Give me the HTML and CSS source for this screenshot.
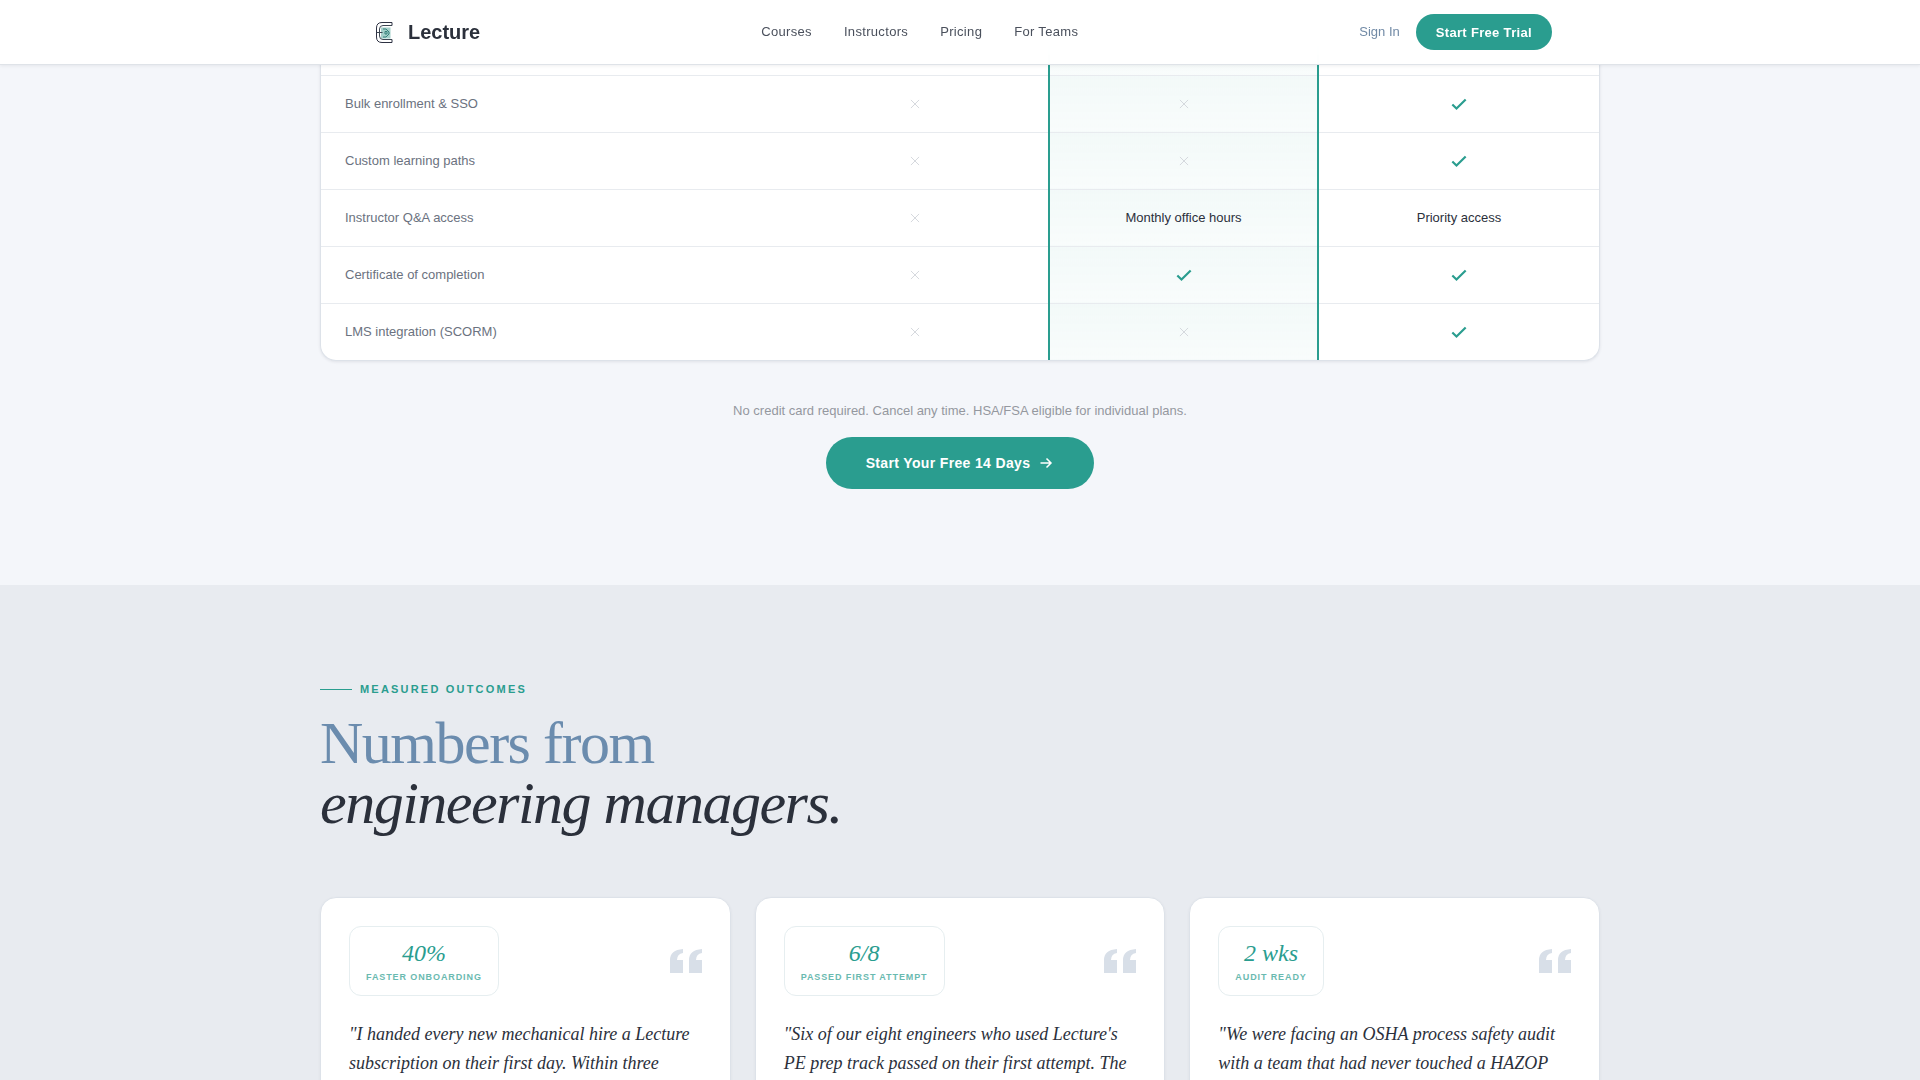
FILE: index.html
```html
<!DOCTYPE html>
<html lang="en">
<head>
  <meta charset="UTF-8">
  <title>Lecture</title>
  <meta name="viewport" content="width=device-width, initial-scale=1.0">
  <link rel="stylesheet" href="styles.css">
</head>
<body>
  <!-- shared icons -->
  <svg class="sprite" aria-hidden="true">
    <symbol id="check" viewBox="0 0 24 24"><path d="M4 12.500l5 5L20 6.500" fill="none" stroke="currentColor" stroke-width="2.600"/></symbol>
    <symbol id="cross" viewBox="0 0 24 24"><path d="M5 5l14 14M19 5L5 19" fill="none" stroke="currentColor" stroke-width="1.500"/></symbol>
    <symbol id="quote" viewBox="0 0 32 24"><path d="M13 0v4Q7 5 7 11h6v13H0V11Q0 1 13 0zM32 0v4Q26 5 26 11h6v13H19V11Q19 1 32 0z" fill="currentColor"/></symbol>
  </svg>

  <header class="nav">
    <div class="nav-inner">
      <a class="logo" href="#">
        <svg class="logo-mark" viewBox="0 0 32 32" fill="none">
          <path d="M13 11.500h9.500v11H13z" fill="#a5d0ca"/>
          <path d="M24 9.500V6.500H14Q8.500 6.500 8.500 12v9q0 5.500 5.500 5.500h10v-3" stroke="#2d3142"/>
          <path d="M24 9.500h-9q-3.500 0-3.500 3.500v7q0 3.500 3.500 3.500h9M8.500 16.500h6" stroke="#3d4652"/>
          <path d="M15 13h3l3 3v2l-3 3h-3M17 15.500h2v2.500h-2z" stroke="#35807a"/>
        </svg>
        <span>Lecture</span>
      </a>
      <nav class="nav-links">
        <a href="#">Courses</a>
        <a href="#">Instructors</a>
        <a href="#">Pricing</a>
        <a href="#">For Teams</a>
      </nav>
      <div class="nav-actions">
        <a class="sign-in" href="#">Sign In</a>
        <button class="btn btn-small" type="button">Start Free Trial</button>
      </div>
    </div>
  </header>

  <main>
    <section class="pricing">
      <div class="container">
        <div class="table-wrap">
          <table>
            <colgroup>
              <col>
              <col class="col-basic">
              <col class="col-pro">
              <col class="col-team">
            </colgroup>
            <tbody>
              <tr><td></td><td></td><td class="featured"></td><td></td></tr>
              <tr>
                <th scope="row">Bulk enrollment &amp; SSO</th>
                <td><svg class="cross"><use href="#cross"/></svg></td>
                <td class="featured"><svg class="cross"><use href="#cross"/></svg></td>
                <td><svg class="check"><use href="#check"/></svg></td>
              </tr>
              <tr>
                <th scope="row">Custom learning paths</th>
                <td><svg class="cross"><use href="#cross"/></svg></td>
                <td class="featured"><svg class="cross"><use href="#cross"/></svg></td>
                <td><svg class="check"><use href="#check"/></svg></td>
              </tr>
              <tr>
                <th scope="row">Instructor Q&amp;A access</th>
                <td><svg class="cross"><use href="#cross"/></svg></td>
                <td class="featured">Monthly office hours</td>
                <td>Priority access</td>
              </tr>
              <tr>
                <th scope="row">Certificate of completion</th>
                <td><svg class="cross"><use href="#cross"/></svg></td>
                <td class="featured"><svg class="check"><use href="#check"/></svg></td>
                <td><svg class="check"><use href="#check"/></svg></td>
              </tr>
              <tr>
                <th scope="row">LMS integration (SCORM)</th>
                <td><svg class="cross"><use href="#cross"/></svg></td>
                <td class="featured"><svg class="cross"><use href="#cross"/></svg></td>
                <td><svg class="check"><use href="#check"/></svg></td>
              </tr>
            </tbody>
          </table>
        </div>
        <div class="pricing-cta">
          <p>No credit card required. Cancel any time. HSA/FSA eligible for individual plans.</p>
          <button class="btn btn-large" type="button">
            Start Your Free 14 Days
            <svg viewBox="0 0 16 16" fill="none" stroke="currentColor" stroke-width="1.500"><path d="M2.500 8h10.500M8.500 3.500L13 8l-4.500 4.500"/></svg>
          </button>
        </div>
      </div>
    </section>

    <section class="outcomes">
      <div class="container">
        <p class="eyebrow">Measured Outcomes</p>
        <h2>Numbers from<br><em>engineering managers.</em></h2>
        <div class="cards">
          <article class="card">
            <div class="card-top">
              <div class="stat"><strong>40%</strong><span>Faster onboarding</span></div>
              <svg class="quote-mark"><use href="#quote"/></svg>
            </div>
            <blockquote>"I handed every new mechanical hire a Lecture subscription on their first day. Within three</blockquote>
          </article>
          <article class="card">
            <div class="card-top">
              <div class="stat"><strong>6/8</strong><span>Passed first attempt</span></div>
              <svg class="quote-mark"><use href="#quote"/></svg>
            </div>
            <blockquote>"Six of our eight engineers who used Lecture's PE prep track passed on their first attempt. The</blockquote>
          </article>
          <article class="card">
            <div class="card-top">
              <div class="stat"><strong>2 wks</strong><span>Audit ready</span></div>
              <svg class="quote-mark"><use href="#quote"/></svg>
            </div>
            <blockquote>"We were facing an OSHA process safety audit with a team that had never touched a HAZOP</blockquote>
          </article>
        </div>
      </div>
    </section>
  </main>
</body>
</html>
```
FILE: styles.css
```css
* { box-sizing: border-box; margin: 0; padding: 0; }
html { overflow: hidden; }
body { font-family: "Liberation Sans", Arial, sans-serif; font-size: 13px; line-height: 20px; color: #2b303b; background: #f4f6fa; }
a { color: inherit; text-decoration: none; }
.sprite { position: absolute; width: 0; height: 0; }
.container { max-width: 1280px; margin: 0 auto; }

/* nav */
.nav { position: fixed; top: 0; left: 0; right: 0; z-index: 10; background: rgba(255, 255, 255, 0.97); backdrop-filter: blur(12px); border-bottom: 1px solid #dfe3e8; box-shadow: 0 1px 3px rgba(45, 49, 66, 0.08); }
.nav-inner { display: flex; align-items: center; justify-content: space-between; max-width: 1280px; height: 64px; margin: 0 auto; padding: 0 48px; }
.logo { display: flex; align-items: center; gap: 8px; font-size: 20px; font-weight: bold; }
.logo-mark { width: 32px; height: 32px; }
.nav-links { display: flex; gap: 32px; letter-spacing: 0.025em; color: #4a505c; }
.nav-actions { display: flex; align-items: center; gap: 16px; }
.sign-in { color: #718aa6; }
.btn { display: inline-flex; align-items: center; border: 0; border-radius: 26px; background: #2a9d8f; color: #fff; font-family: inherit; font-weight: bold; letter-spacing: 0.025em; cursor: pointer; }
.btn-small { height: 36px; padding: 0 20px; font-size: 13px; }
.btn-large { height: 52px; padding: 0 40px; gap: 8px; font-size: 14px; }
.btn-large svg { width: 16px; height: 16px; }

/* comparison table */
.pricing { padding: 18px 24px 96px; }
.table-wrap { overflow: hidden; border: 1px solid #dde2e9; border-top: 0; border-radius: 0 0 16px 16px; background: #fff; box-shadow: 0 1px 3px rgba(45, 49, 66, 0.1); }
table { width: 100%; table-layout: fixed; border-collapse: collapse; }
.col-basic { width: 267px; }
.col-pro { width: 269px; }
.col-team { width: 281px; }
th, td { height: 57px; padding: 0 24px; border-bottom: 1px solid #e8ebef; line-height: 22px; text-align: center; vertical-align: middle; }
th { font-weight: normal; text-align: left; color: #6b7280; }
tr:last-child th, tr:last-child td { border-bottom: 0; }
td svg { display: block; margin: 0 auto; }
.featured { border-left: 2px solid #2a9d8f; border-right: 2px solid #2a9d8f; background: linear-gradient(rgba(42, 157, 143, 0.06), rgba(42, 157, 143, 0.03)); }
.check { width: 20px; height: 20px; color: #2a9d8f; }
.cross { width: 14px; height: 14px; color: #d0d4d9; }
.pricing-cta { padding-top: 40px; text-align: center; }
.pricing-cta p { margin-bottom: 16px; color: #94989f; }

/* outcomes */
.outcomes { padding: 94px 24px 96px; background: #e8ebf0; }
.eyebrow { display: flex; align-items: center; gap: 8px; font-size: 11px; font-weight: bold; letter-spacing: 0.2em; text-transform: uppercase; color: #2a9d8f; }
.eyebrow::before { content: ""; width: 32px; height: 1px; background: #2a9d8f; }
h2 { margin: 14px 0 64px; font-family: "Liberation Serif", "Times New Roman", serif; font-size: 60px; font-weight: normal; line-height: 60px; letter-spacing: -0.025em; color: #6b8cae; }
h2 em { color: #2b303b; }
.cards { display: grid; grid-template-columns: repeat(3, 1fr); gap: 24px; }
.card { padding: 28px; border: 1px solid #dde2e9; border-radius: 16px; background: #fff; box-shadow: 0 1px 3px rgba(45, 49, 66, 0.06); }
.card-top { display: flex; align-items: center; justify-content: space-between; margin-bottom: 24px; }
.stat { display: flex; flex-direction: column; align-items: center; padding: 14px 16px 12px; border: 1px solid #e6eef0; border-radius: 12px; color: #2a9d8f; }
.stat strong { font-family: "Liberation Serif", "Times New Roman", serif; font-size: 24px; font-style: italic; font-weight: normal; line-height: 24px; }
.stat span { margin-top: 6px; font-size: 9px; font-weight: bold; line-height: 12px; letter-spacing: 0.1em; text-transform: uppercase; opacity: 0.7; }
.quote-mark { width: 32px; height: 24px; color: #d8dfe8; }
blockquote { font-family: "Liberation Serif", "Times New Roman", serif; font-size: 18px; font-style: italic; line-height: 29px; }
```
